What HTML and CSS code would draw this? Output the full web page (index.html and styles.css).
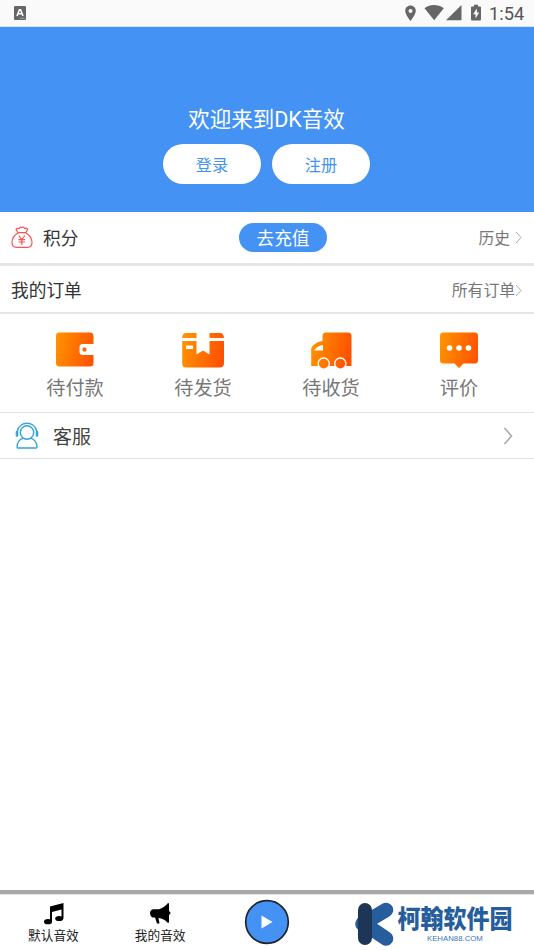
FILE: index.html
```html
<!DOCTYPE html>
<html lang="zh-CN">
<head>
<meta charset="utf-8">
<title>DK音效</title>
<link rel="stylesheet" href="styles.css">
</head>
<body>
<header class="status">
  <svg class="app-icon" width="12" height="14" viewBox="0 0 12 14"><rect width="12" height="14" rx="1" fill="#666"/><path d="M3 10 5.400 3.800h1.200L9 10M4 7.800h4" fill="none" stroke="#fff" stroke-width="1.600"/><path d="M6 12.400h5" stroke="#ccc" stroke-width=".8" stroke-dasharray="1.5 .7"/></svg>
  <svg class="indicators" width="80" height="18" viewBox="0 0 80 18" fill="#666">
    <path fill-rule="evenodd" d="M6.500 1.500C3.500 1.500 1.200 3.800 1.200 6.700c0 3.900 5.300 10.300 5.300 10.300s5.300-6.400 5.300-10.300c0-2.900-2.300-5.200-5.300-5.200Zm0 3.500a2 2 0 1 1 0 4 2 2 0 0 1 0-4Z"/>
    <path d="M20.500 4.200C26-.1 34-.1 39.800 4.200L30.200 16.300Z"/>
    <path d="M57.500 1v15.300H42Z"/>
    <path fill-rule="evenodd" d="M70 .8h4v1.600h2q1 0 1 1v12.200q0 1-1 1h-8q-1 0-1-1V3.400q0-1 1-1h2ZM73 4.500 69 10.200h2.500v4.300L75.200 8.600H73Z"/>
  </svg>
  <span class="clock">1:54</span>
</header>
<section class="hero">
  <h1>欢迎来到DK音效</h1>
  <div class="buttons"><button>登录</button><button>注册</button></div>
</section>
<main>
  <section class="row points">
    <svg class="bag" width="22" height="23" viewBox="0 0 22 23" fill="none" stroke="#fb5252" stroke-width="1.200" stroke-linejoin="round" stroke-linecap="round"><path d="M7 6.700 5 3.200q1.500-1.500 3-.6Q9 .6 10.800 1.500 12.500.5 13.700 2.400q2-.8 3 .8L14.800 6.700ZM7 6.900C3.500 9 1 12.500 1 16.200 1 19.500 2.500 21.300 5.500 21.300h11C19.500 21.300 21 19.500 21 16.200 21 12.500 18.400 9 14.800 6.900M8 10l2.800 3.500 2.800-3.500M10.800 13.500v5M7.900 13.700h5.800M7.900 16h5.800"/></svg>
    <span class="label">积分</span>
    <span class="recharge">去充值</span>
    <span class="more">历史 <svg class="chevron gap" width="7" height="13" viewBox="0 0 7 13"><path d="m1 1 5 5.500-5 5.500"/></svg></span>
  </section>
  <section class="row orders">
    <span class="label">我的订单</span>
    <span class="more">所有订单 <svg class="chevron" width="7" height="13" viewBox="0 0 7 13"><path d="m1 1 5 5.500-5 5.500"/></svg></span>
  </section>
  <section class="grid">
    <div class="cell">
      <svg width="44" height="38" viewBox="0 0 44 38"><defs><linearGradient id="orange" gradientUnits="userSpaceOnUse" x1="3" y1="14" x2="41" y2="22"><stop stop-color="#ff9100"/><stop offset="1" stop-color="#ff5200"/></linearGradient></defs><path fill="url(#orange)" d="M6 1.500h31q3.500 0 3.500 4V13H30q-3.500 0-3.500 3v5q0 3 3.500 3h10.500v8q0 3.500-3.500 3.500H6.500Q3 35.500 3 32V5q0-3.500 3-3.500Z"/><rect x="29.500" y="16.500" width="4" height="4" rx="1.500" fill="#ff6500"/></svg>
      <span>待付款</span>
    </div>
    <div class="cell">
      <svg width="44" height="38" viewBox="0 0 44 38" fill="url(#orange)"><path d="M5 2h10.500v5H1.200Q1.500 2 5 2ZM28.500 2H39q3.500 0 4 5H28.500Z"/><path fill-rule="evenodd" d="M1.200 10h14.300v13.500L22 19.500l6.500 4V10H43v22q0 4.500-4 4.500H5q-3.800 0-3.800-4.500ZM5 14.500V18h7v-3.500Z"/></svg>
      <span>待发货</span>
    </div>
    <div class="cell">
      <svg width="44" height="38" viewBox="0 0 44 38" fill="url(#orange)"><path fill-rule="evenodd" d="M17 1.500h22q3.500 0 3.500 3.500v30h-5.500a6.200 6.200 0 1 0-11.400 0h-5.200a6.200 6.200 0 1 0-11.400 0H2.200V18q0-1.800 1.500-3.200 4.300-4 9.800-4.800V5q0-3.500 3.500-3.500ZM5 19.500h9V14Q8.500 14.500 5 19.500Z"/><circle cx="14.700" cy="32.600" r="4.900"/><circle cx="31.300" cy="32.600" r="4.900"/></svg>
      <span>待收货</span>
    </div>
    <div class="cell">
      <svg width="44" height="38" viewBox="0 0 44 38"><path fill="url(#orange)" d="M6 1.500h32q3 0 3 3.500v24q0 3.500-3 3.500H26.500L22 37l-4.500-4.500H6q-3 0-3-3.500V5q0-3.500 3-3.500Z"/><g fill="#fff"><circle cx="12.500" cy="17" r="2.800"/><circle cx="22" cy="17" r="2.800"/><circle cx="31.500" cy="17" r="2.800"/></g></svg>
      <span>评价</span>
    </div>
  </section>
  <section class="row service">
    <svg width="24" height="28" viewBox="0 0 24 28" fill="none" stroke="#35a3dc" stroke-width="1.400"><circle cx="12" cy="10.500" r="6.700"/><path d="M8.200 16.200Q2.200 18.500 2 25q0 1 1 1h18q1 0 1-1Q21.800 18.500 15.800 16.200M2.200 9.500C4.500-1.500 19.500-1.500 21.800 9.500"/><path d="M2 10v3.500M22 10v3.500" stroke-width="2.600" stroke-linecap="round"/></svg>
    <span class="service-label">客服</span>
    <svg class="service-chevron" width="10" height="18" viewBox="0 0 10 18"><path d="m1.500 1 7 8-7 8"/></svg>
  </section>
</main>
<nav>
  <div class="tab">
    <svg width="22" height="22" viewBox="0 0 22 22"><ellipse cx="5" cy="18.700" rx="4" ry="2.600"/><ellipse cx="16.200" cy="15.500" rx="4" ry="2.600"/><path d="M7 3.500 20.500 0v15.500H18.500V6.500L9 9v9.700H7Z"/></svg>
    <span>默认音效</span>
  </div>
  <div class="tab">
    <svg width="22" height="22" viewBox="0 0 22 22"><path d="M18 0q1 0 1 1v7q3 2 0 4v7q0 1-1 1-4-4.300-9.500-5l1 5.500H7L5 14.500H2.500Q0 13 0 10.200 0 7 3 6.200h6Q14 5 18 0Z"/></svg>
    <span>我的音效</span>
  </div>
  <div class="tab play"><svg width="46" height="46" viewBox="0 0 46 46"><circle cx="23" cy="23" r="21.300" fill="#4392f4" stroke="#20252c" stroke-width="1.700"/><path d="m17.500 16.500 11 6.500-11 6.500Z" fill="#fff"/></svg></div>
  <div class="brand">
    <svg width="40" height="44" viewBox="0 0 40 44"><path d="M8.500 22 32 8M9 21l23 15.500" stroke="#265d9c" stroke-width="14.500" stroke-linecap="round"/><path d="M11 8v28" stroke="#1d3557" stroke-width="14" stroke-linecap="round"/></svg>
    <div class="brand-text"><strong>柯翰软件园</strong><span>KEHAN88.COM</span></div>
  </div>
</nav>
</body>
</html>
```
FILE: styles.css
```css
* { box-sizing: border-box; }
body {
  margin: 0;
  height: 950px;
  display: flex;
  flex-direction: column;
  overflow: hidden;
  background: #fff;
  color: #333;
  font-family: Roboto, "Noto Sans CJK SC", sans-serif;
}
svg { display: block; flex: none; }
.status {
  height: 27px;
  flex: none;
  display: flex;
  align-items: center;
  padding: 0 9px 0 14px;
  background: #fafafa;
  border-bottom: 1px solid #d5e4f6;
}
.indicators { margin-left: auto; }
.clock { width: 36px; margin-left: 5px; font-size: 18.300px; line-height: 26px; font-weight: 400; color: #555; white-space: nowrap; padding-top: 2px; }
.hero {
  height: 185px;
  flex: none;
  background: #4392f4;
  display: flex;
  flex-direction: column;
  align-items: center;
  padding: 77px 1px 0 0;
}
h1 { margin: 0; font-size: 21.500px; font-weight: 400; line-height: 32px; color: #fff; }
.buttons { display: flex; gap: 11px; margin: 8px 1px 0 0; }
button {
  width: 98px;
  height: 40px;
  border: 0;
  padding: 0 0 1px 1px;
  border-radius: 20px;
  background: #fff;
  color: #4392f4;
  font: 16.200px Roboto, "Noto Sans CJK SC", sans-serif;
  box-shadow: 0 0 1px #3884df;
}
.row { display: flex; align-items: center; padding: 0 12px 0 11px; }
.points { height: 54px; border-bottom: 3px solid #e6e6e6; display: grid; grid-template-columns: 32px 196px 88px 1fr; }
.label { font-size: 17.700px; line-height: 26px; padding-top: 2px; }
.recharge {
  height: 29px;
  padding-top: 2px;
  border-radius: 15px;
  background: #4392f4;
  color: #fff;
  font-size: 17.700px;
  line-height: 28px;
  text-align: center;
}
.more { display: flex; align-items: center; margin-left: auto; padding-top: 2px; font-size: 15.800px; color: #777; line-height: 24px; }
.chevron { margin-bottom: 2px; }
.chevron path, .service-chevron path { fill: none; stroke: #aaa; stroke-width: 1; }
.gap { margin-left: 5px; }
.orders { height: 48px; border-bottom: 2px solid #e6e6e6; }
.orders .label, .orders .more { padding-top: 4px; }
.grid { height: 99px; padding: 17px 11px 0; display: grid; grid-template-columns: repeat(4, 1fr); border-bottom: 1px solid #e2e2e2; }
.cell { display: flex; flex-direction: column; align-items: center; font-size: 19.200px; line-height: 28px; color: #777; gap: 6px; }
.service { height: 46px; padding: 0 21px 0 15px; border-bottom: 1px solid #e0e0e0; }
.service-label { margin-left: 14px; font-size: 19px; color: #444; }
.service-chevron { margin-left: auto; }
.service-chevron path { stroke-width: 1.600; }
nav {
  height: 60px;
  flex: none;
  margin-top: auto;
  border-top: 4px solid #a9a9a9;
  display: grid;
  grid-template-columns: repeat(3, 106.800px) 1fr;
  box-shadow: inset 0 1px #e6e6e6;
}
.tab { display: flex; flex-direction: column; align-items: center; padding-top: 9px; font-size: 12.700px; line-height: 18px; color: #222; gap: 2px; }
.tab:not(.play) svg { margin-left: 2px; }
.play { padding-top: 5px; }
.brand { display: flex; padding: 8px 0 0 34px; }
.brand-text { display: flex; flex-direction: column; align-items: center; margin-left: 3px; width: 115px; white-space: nowrap; }
.brand strong { margin-top: 6px; font-size: 23px; line-height: 24px; font-weight: 900; color: #265d9c; transform: scaleY(1.080); }
.brand span { margin-top: 3px; font: 7.800px/8px "Liberation Sans", sans-serif; color: #3b76ba; }
```
